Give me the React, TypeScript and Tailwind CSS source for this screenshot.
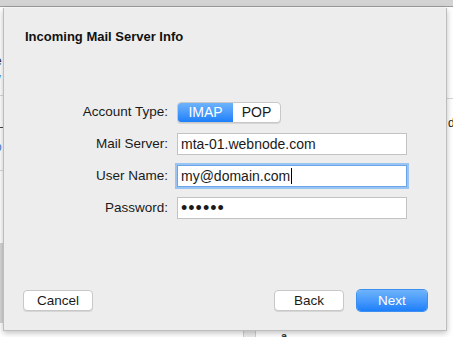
import { useState } from "react";

const font = { fontFamily: '"Liberation Sans", Arial, sans-serif' };

function Field({ value, focused, password }: { value: string; focused?: boolean; password?: boolean }) {
  return (
    <div
      className={
        "flex h-[22px] w-[230px] items-center bg-white pl-[3px] text-[14px] text-[#1a1a1a] " +
        (focused
          ? "border border-[#6aa5ea] shadow-[0_0_0_2px_#9cc4f2]"
          : "border border-[#c3c3c3]")
      }
    >
      {password ? <span className="text-[18px] leading-none tracking-[1px]">••••••</span> : value}
      {focused && <span className="ml-px h-[16px] w-px bg-black" />}
    </div>
  );
}

function Button({ label, primary }: { label: string; primary?: boolean }) {
  return (
    <button
      className={
        "h-[21px] w-[70px] rounded-[4px] text-[13.5px] leading-none " +
        (primary
          ? "bg-gradient-to-b from-[#6db3fb] to-[#1b7ffa] text-white shadow-[0_0_0_1px_#3d8ff0]"
          : "border border-[#c8c8c8] bg-white text-[#1a1a1a] shadow-[0_1px_0_#d6d6d6]")
      }
    >
      {label}
    </button>
  );
}

export default function App() {
  const [type, setType] = useState("IMAP");

  return (
    <div className="relative h-[337px] w-[453px] overflow-hidden bg-white" style={font}>
      {/* toolbar of the window behind */}
      <div className="h-[7px] border-b border-[#9c9c9c] bg-[#d3d3d3]" />

      {/* bits of the window behind the sheet */}
      <div className="absolute left-0 top-[8px] h-[329px] w-[3px] overflow-hidden text-[12px]">
        <span className="absolute left-[-5px] top-[44px] text-[#333]">e</span>
        <span className="absolute left-[-5px] top-[61px] text-[#4a7ecf]">v</span>
        <span className="absolute left-[-5px] top-[77px] text-[#555]">l</span>
        <div className="absolute top-[87px] h-px w-full bg-[#d8d8d8]" />
        <div className="absolute top-[119px] h-px w-full bg-[#444]" />
        <span className="absolute left-[-5px] top-[130px] text-[#4a7ecf]">o</span>
        <div className="absolute top-[162px] h-px w-full bg-[#d8d8d8]" />
        <span className="absolute left-[-5px] top-[173px] font-bold text-[#222]">r</span>
        <span className="absolute left-[-5px] top-[206px] text-[#c08a40]">.</span>
        <div className="absolute top-[235px] h-[80px] w-full bg-[#d6d6d6]" />
      </div>
      <div className="absolute right-0 top-[8px] h-[329px] w-[6px] overflow-hidden">
        <div className="absolute top-[90px] h-px w-full bg-[#d8d8d8]" />
        <span className="absolute left-[1px] top-[106px] text-[12px] text-[#222]">df</span>
      </div>
      <div className="absolute bottom-0 left-[243px] h-[6px] w-[13px] border-x border-[#cfcfcf] bg-[#ececec]" />
      <span className="absolute left-[281px] top-[328px] text-[11px] font-bold text-[#333]">a</span>

      {/* sheet */}
      <div className="absolute left-[3px] top-[8px] flex h-[323px] w-[444px] flex-col border-x border-b border-[#bdbdbd] bg-[#ededed] px-[19px] pb-[19px] shadow-[0_2px_6px_rgba(0,0,0,0.25)]">
        <h1 className="ml-[2px] mt-[21px] text-[13px] font-bold leading-[16px] text-[#111]">Incoming Mail Server Info</h1>

        <div className="mt-[56px] grid grid-cols-[145px_230px] items-center gap-x-[9px] gap-y-[10px] text-[13.5px] text-[#1a1a1a]">
          <span className="text-right">Account Type:</span>
          <div className="flex h-[22px] items-center">
            <div className="flex h-[21px] overflow-hidden rounded-[4px] border border-[#c8c8c8] bg-white shadow-[0_1px_0_#d6d6d6]">
              {["IMAP", "POP"].map((t) => (
                <button
                  key={t}
                  onClick={() => setType(t)}
                  className={
                    "text-[14px] leading-none " +
                    (t === type
                      ? "w-[55px] bg-gradient-to-b from-[#6db3fb] to-[#1b7ffa] text-white"
                      : "w-[47px] text-[#1a1a1a]")
                  }
                >
                  {t}
                </button>
              ))}
            </div>
          </div>

          <span className="text-right">Mail Server:</span>
          <Field value="mta-01.webnode.com" />

          <span className="text-right">User Name:</span>
          <Field value="my@domain.com" focused />

          <span className="text-right">Password:</span>
          <Field value="" password />
        </div>

        <div className="mt-auto flex items-center">
          <Button label="Cancel" />
          <div className="flex-1" />
          <Button label="Back" />
          <div className="w-[13px]" />
          <Button label="Next" primary />
        </div>
      </div>
    </div>
  );
}
